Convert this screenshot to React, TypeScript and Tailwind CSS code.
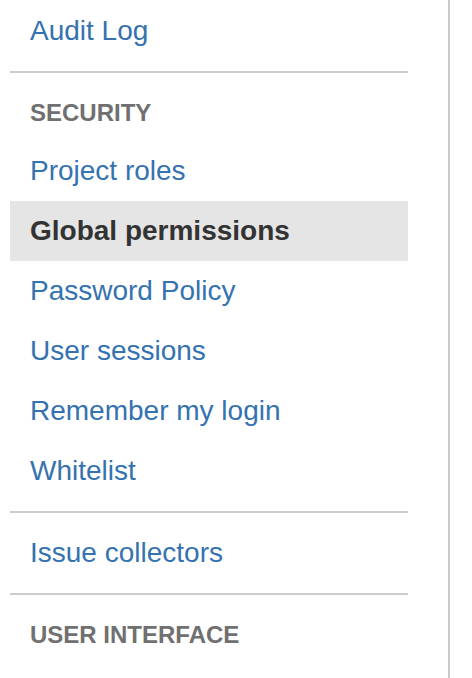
import React from "react";

type NavItem = { label: string; active?: boolean };

const font = { fontFamily: '"Liberation Sans", Arial, sans-serif' };

function Item({ label, active }: NavItem) {
  return active ? (
    <div className="h-[60px] leading-[60px] pl-5 bg-[#e5e5e5] text-[28px] font-bold text-[#333333]">
      {label}
    </div>
  ) : (
    <a href="#" className="block h-[60px] leading-[60px] pl-5 text-[28px] text-[#3572b0] no-underline">
      {label}
    </a>
  );
}

function Heading({ label, className = "" }: { label: string; className?: string }) {
  return (
    <div className={`pl-5 leading-[60px] text-[24px] font-bold uppercase text-[#707070] ${className}`}>
      {label}
    </div>
  );
}

function Divider() {
  return <div className="my-[10px] h-[2px] bg-[#cccccc]" />;
}

export default function App() {
  const security: NavItem[] = [
    { label: "Project roles" },
    { label: "Global permissions", active: true },
    { label: "Password Policy" },
    { label: "User sessions" },
    { label: "Remember my login" },
    { label: "Whitelist" },
  ];

  return (
    <div className="w-[472px] h-[678px] overflow-hidden bg-white flex" style={font}>
      {/* sidebar */}
      <nav className="w-[450px] shrink-0 border-r-2 border-[#cccccc] pt-px pl-[10px] pr-[40px]">
        <Item label="Audit Log" />
        <Divider />
        <Heading label="Security" className="h-[58px]" />
        {security.map((it) => (
          <Item key={it.label} {...it} />
        ))}
        <Divider />
        <Item label="Issue collectors" />
        <Divider />
        <Heading label="User Interface" className="h-[60px]" />
      </nav>
      <div className="flex-1" />
    </div>
  );
}
